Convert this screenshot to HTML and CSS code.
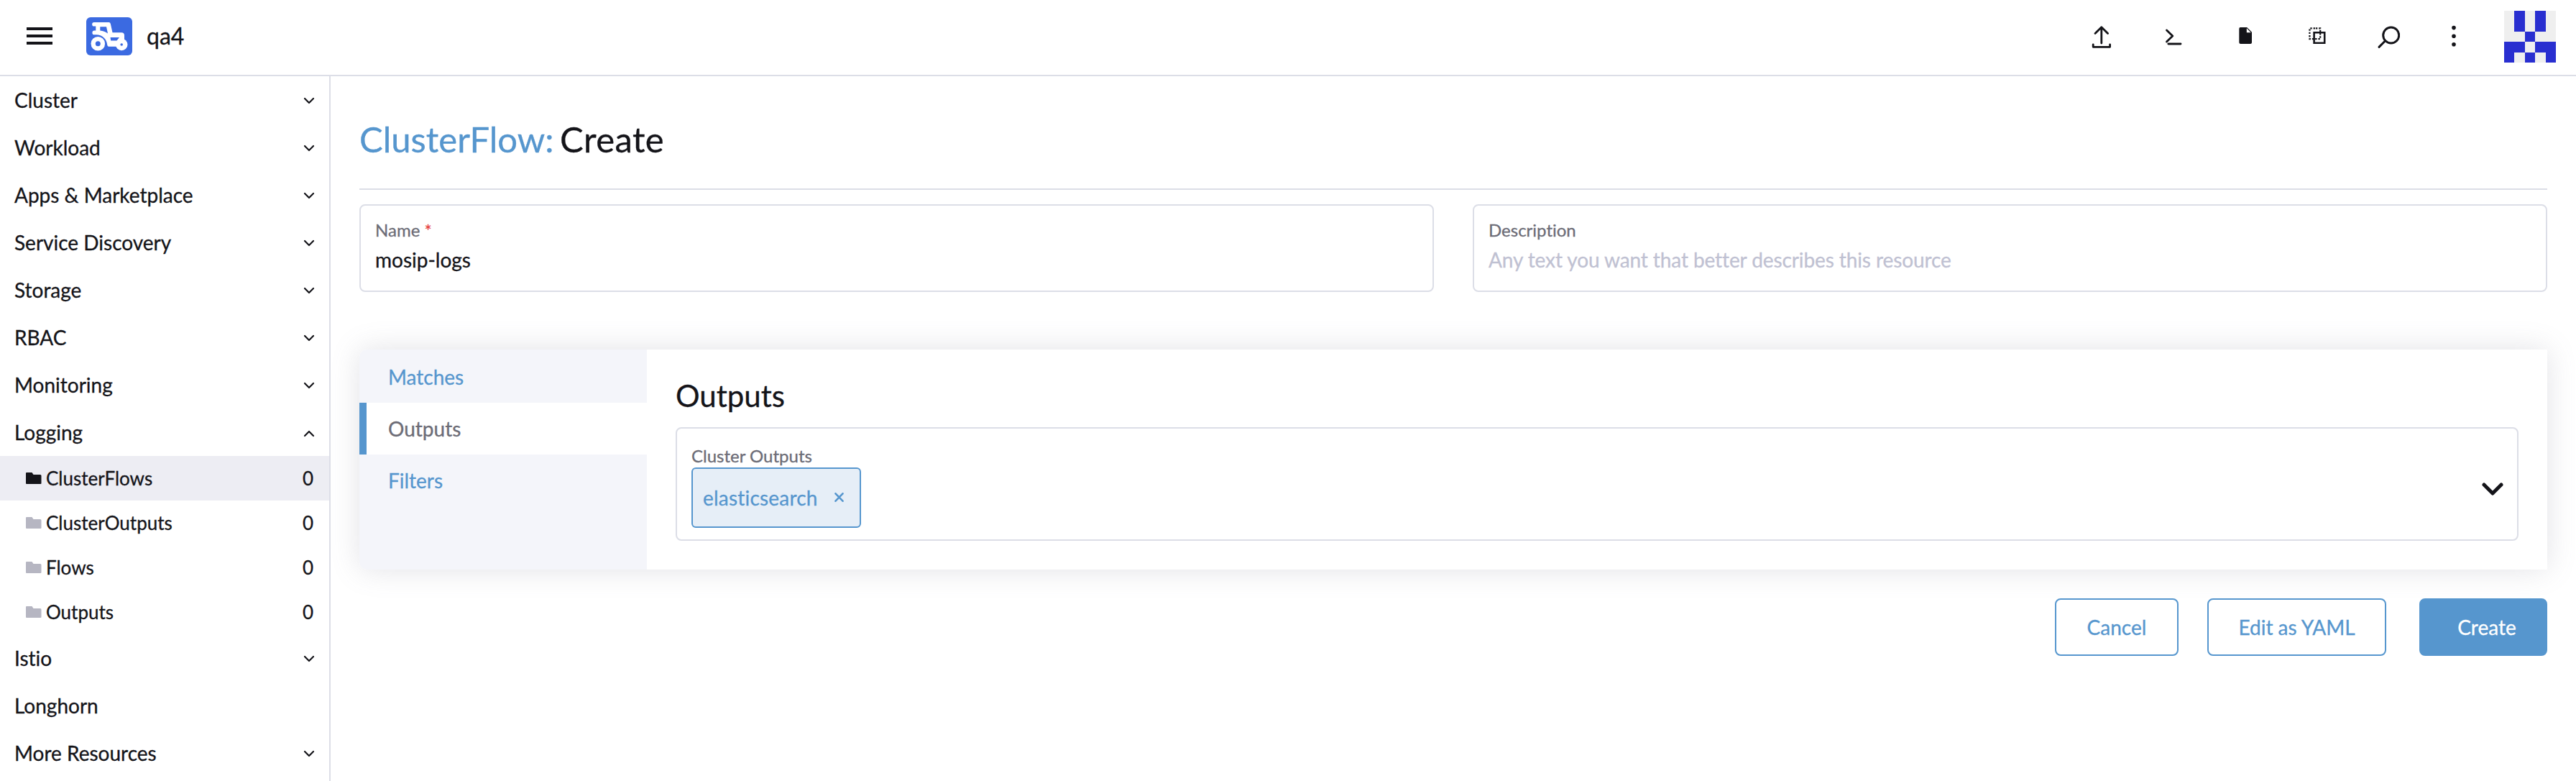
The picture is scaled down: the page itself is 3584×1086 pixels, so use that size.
FILE: index.html
```html
<!DOCTYPE html>
<html lang="en">
<head>
<meta charset="utf-8">
<title>ClusterFlow: Create</title>
<link rel="stylesheet" href="styles.css">
</head>
<body>
<header class="topbar">
  <svg class="menu" width="36" height="24" viewBox="0 0 36 24"><path d="M0 0h36v4H0zM0 10h36v4H0zM0 20h36v4H0z"/></svg>
  <svg class="brand" width="64" height="53" viewBox="0 0 64 53">
    <rect width="64" height="53" rx="6" fill="#3b6ae1"/>
    <path fill="#fff" d="M11 6.900H31.500q1.800 0 2.300 2L36.500 21.200H49q4 0 4 4V34L44 40.700H31.500q-2 0-2.200-2C28.500 30 22 24.300 14 24.300H11.300a2.900 2.900 0 0 1 0-5.800H13.300V12.600H11a2.850 2.850 0 0 1 0-5.700z"/>
    <path fill="#3b6ae1" d="M19.300 13.200H28l2 9.300c-3-2.400-7-3.900-10.700-4.100zM33.500 28H46l-3.500 4.600h-8.300z"/>
    <circle cx="16.300" cy="36.700" r="9.800" fill="#fff"/><circle cx="16.300" cy="36.700" r="3.500" fill="#3b6ae1"/>
    <circle cx="49.200" cy="38" r="8.300" fill="#fff"/><circle cx="49.200" cy="38" r="1.800" fill="#3b6ae1"/>
  </svg>
  <span class="cluster-name">qa4</span>
  <nav class="tools">
    <svg class="tool upload" width="30" height="36" viewBox="0 0 30 36"><path d="M14.800 28V6M6 14.500L14.800 5.700l8.800 8.800M3.200 30V33.300H26.600V30"/></svg>
    <svg class="tool terminal" width="26" height="36" viewBox="0 0 26 36"><path d="M3.500 10l8.300 8-8.300 8M5.800 29H23"/></svg>
    <svg class="tool file" width="18" height="36" viewBox="0 0 18 36"><path class="solid" d="M2 6h9.200L18 12.800V27q0 2-2 2H2.300q-2 0-2-2V8q0-2 1.700-2z"/><path class="fold" d="M10.800 7.300v5.900h5.900z"/></svg>
    <svg class="tool copy" width="24" height="36" viewBox="0 0 24 36"><path class="dashed" d="M9 7.400H1.400V22.200H16.200V7.400H9"/><path d="M7.600 13.200H22.200V27.700H7.600z"/></svg>
    <svg class="tool search" width="32" height="36" viewBox="0 0 32 36"><circle cx="19.700" cy="17" r="11"/><path d="M10.600 25.800L3 33.400"/></svg>
    <svg class="tool more" width="6" height="36" viewBox="0 0 6 36"><circle class="solid" cx="3" cy="6.600" r="2.800"/><circle class="solid" cx="3" cy="18.200" r="2.800"/><circle class="solid" cx="3" cy="29.700" r="2.800"/></svg>
    <svg class="avatar" width="72" height="72" viewBox="0 0 5 5" shape-rendering="crispEdges"><path fill="#efefef" d="M0 0h5v5H0z"/><path fill="#292fd0" d="M1 0h1v2H1zM3 0h1v2H3zM2 2h1v1H2zM0 3h2v1H1v1H0zM3 3h2v2H4V4H3zM2 4h1v1H2z"/></svg>
  </nav>
</header>
<div class="body">
  <aside class="sidebar">
    <div class="group">Cluster<svg class="chev" viewBox="0 0 14 9"><path d="M1 1l6 6 6-6"/></svg></div>
    <div class="group">Workload<svg class="chev" viewBox="0 0 14 9"><path d="M1 1l6 6 6-6"/></svg></div>
    <div class="group">Apps &amp; Marketplace<svg class="chev" viewBox="0 0 14 9"><path d="M1 1l6 6 6-6"/></svg></div>
    <div class="group">Service Discovery<svg class="chev" viewBox="0 0 14 9"><path d="M1 1l6 6 6-6"/></svg></div>
    <div class="group">Storage<svg class="chev" viewBox="0 0 14 9"><path d="M1 1l6 6 6-6"/></svg></div>
    <div class="group">RBAC<svg class="chev" viewBox="0 0 14 9"><path d="M1 1l6 6 6-6"/></svg></div>
    <div class="group">Monitoring<svg class="chev" viewBox="0 0 14 9"><path d="M1 1l6 6 6-6"/></svg></div>
    <div class="group">Logging<svg class="chev" viewBox="0 0 14 9"><path d="M1 8l6-6 6 6"/></svg></div>
    <div class="item current"><svg class="folder" viewBox="0 0 22 17"><path d="M1 0h7.500l2 3H20q1.500 0 1.500 1.500v10.500q0 1-1 1H1q-1 0-1-1V1q0-1 1-1z"/></svg><span class="item-name">ClusterFlows</span><span>0</span></div>
    <div class="item"><svg class="folder" viewBox="0 0 22 17"><path d="M1 0h7.500l2 3H20q1.500 0 1.500 1.500v10.500q0 1-1 1H1q-1 0-1-1V1q0-1 1-1z"/></svg><span class="item-name">ClusterOutputs</span><span>0</span></div>
    <div class="item"><svg class="folder" viewBox="0 0 22 17"><path d="M1 0h7.500l2 3H20q1.500 0 1.500 1.500v10.500q0 1-1 1H1q-1 0-1-1V1q0-1 1-1z"/></svg><span class="item-name">Flows</span><span>0</span></div>
    <div class="item"><svg class="folder" viewBox="0 0 22 17"><path d="M1 0h7.500l2 3H20q1.500 0 1.500 1.500v10.500q0 1-1 1H1q-1 0-1-1V1q0-1 1-1z"/></svg><span class="item-name">Outputs</span><span>0</span></div>
    <div class="group">Istio<svg class="chev" viewBox="0 0 14 9"><path d="M1 1l6 6 6-6"/></svg></div>
    <div class="group">Longhorn</div>
    <div class="group">More Resources<svg class="chev" viewBox="0 0 14 9"><path d="M1 1l6 6 6-6"/></svg></div>
  </aside>
  <main class="main">
    <h1 class="title"><span class="kind">ClusterFlow:</span> <span class="action">Create</span></h1>
    <div class="fields">
      <div class="field"><label class="label">Name <span class="required">*</span></label><div class="value">mosip-logs</div></div>
      <div class="field"><label class="label">Description</label><div class="value placeholder">Any text you want that better describes this resource</div></div>
    </div>
    <section class="panel">
      <nav class="tabs">
        <div class="tab">Matches</div>
        <div class="tab active">Outputs</div>
        <div class="tab">Filters</div>
      </nav>
      <div class="content">
        <h3 class="heading">Outputs</h3>
        <div class="select">
          <div class="select-main">
            <label class="label">Cluster Outputs</label>
            <div class="chip"><span>elasticsearch</span><svg width="15" height="13" viewBox="0 0 15 13"><path d="M2.500 1.300l10 10.400M12.500 1.300L2.500 11.700"/></svg></div>
          </div>
          <svg class="open" width="30" height="18" viewBox="0 0 30 18"><path d="M3 3l12 12L27 3"/></svg>
        </div>
      </div>
    </section>
    <footer class="actions">
      <button class="btn cancel">Cancel</button>
      <button class="btn yaml">Edit as YAML</button>
      <button class="btn create">Create</button>
    </footer>
  </main>
</div>
</body>
</html>
```
FILE: styles.css
```css
* { box-sizing: border-box; }
body {
  margin: 0;
  height: 1086px;
  display: flex;
  flex-direction: column;
  overflow: hidden;
  background: #fff;
  color: #141419;
  font: 28px/1.2 Lato, "Liberation Sans", sans-serif;
  font-variant-ligatures: none;
  -webkit-text-stroke: 0.3px;
}
svg { display: block; flex: none; }

/* Top bar */
.topbar {
  height: 106px;
  flex: none;
  display: flex;
  align-items: center;
  padding: 0 28px 4px 37px;
  border-bottom: 2px solid #dcdee7;
  fill: #141419;
}
.brand { margin-left: 47px; }
.cluster-name { margin-left: 20px; font-size: 32px; }
.tools { margin-left: auto; display: flex; align-items: center; }
.tool { fill: none; stroke: #141419; stroke-width: 2.8; stroke-linecap: round; stroke-linejoin: round; }
.tool .solid { fill: #141419; stroke: none; }
.tool .fold { fill: #fff; stroke: none; }
.tool .dashed { stroke-width: 2.2; stroke-dasharray: 2.4 1.9; stroke-linecap: butt; }
.terminal { margin-left: 72px; }
.file { margin-left: 78px; }
.copy { margin-left: 79px; stroke-width: 2.6; stroke-linejoin: miter; }
.search { margin-left: 71px; stroke-width: 3; }
.more { margin-left: 72px; }
.avatar { margin: 2px 0 0 67px; }

/* Side navigation */
.body { display: flex; flex: 1; min-height: 0; }
.sidebar { width: 460px; flex: none; border-right: 2px solid #dcdee7; }
.group {
  height: 66px;
  padding: 2px 21px 0 20px;
  display: flex;
  align-items: center;
  justify-content: space-between;
}
.chev { width: 14px; height: 9px; overflow: visible; fill: none; stroke: #141419; stroke-width: 2.2; stroke-linecap: round; stroke-linejoin: round; }
.item { height: 62px; padding: 1px 22px 0 36px; display: flex; align-items: center; font-size: 26px; }
.item.current { background: #ededf3; }
.folder { width: 22px; height: 17px; margin-right: 6px; fill: #b6b6c2; }
.current .folder { fill: #141419; }
.item-name { flex: 1; }

/* Form */
.main { flex: 1; min-width: 0; padding: 0 40px; }
.title { margin: 0; height: 158px; padding-top: 58px; border-bottom: 2px solid #dcdee7; font-size: 49px; font-weight: 400; line-height: 58px; word-spacing: -4px; }
.action { letter-spacing: 0.4px; }
.kind { color: #5696ce; }
.fields { display: grid; grid-template-columns: 1fr 1fr; gap: 54px; margin-top: 20px; }
.field { height: 122px; padding: 19px 20px; border: 2px solid #dcdee7; border-radius: 8px; }
.label { display: block; font-size: 24px; line-height: 30px; color: #6c6c76; }
.required { color: #e6413f; }
.value { margin-top: 7px; line-height: 38px; }
.placeholder { color: #bfc1d2; letter-spacing: -0.1px; }

/* Tabbed panel */
.panel { display: flex; height: 306px; margin-top: 80px; border-radius: 10px 0 0 10px; box-shadow: 0 0 40px rgba(108, 108, 128, 0.2); }
.tabs { width: 400px; padding-top: 2px; background: #f4f5fa; border-radius: 10px 0 0 10px; }
.tab { height: 72px; padding-left: 40px; line-height: 72px; color: #5696ce; }
.tab.active { padding-left: 30px; border-left: 10px solid #5696ce; background: #fff; color: #6c6c76; }
.content { flex: 1; padding: 40px 40px 0; background: #fff; }
.heading { margin: 0 0 20px; font-size: 42px; font-weight: 400; line-height: 48px; }
.select { height: 158px; display: flex; padding: 23px 20px 0; border: 2px solid #dcdee7; border-radius: 8px; }
.select-main { flex: 1; }
.chip {
  display: flex;
  align-items: center;
  justify-content: space-between;
  width: 236px;
  height: 84px;
  margin-top: 1px;
  padding: 2px 21px 0 14px;
  border: 2px solid #5696ce;
  border-radius: 6px;
  background: #e6eef7;
  color: #5696ce;
  letter-spacing: 0.2px;
}
.chip svg { margin-bottom: 3px; fill: none; stroke: #5696ce; stroke-width: 2.6; stroke-linecap: round; }
.open { margin: 52px -1px 0 0; fill: none; stroke: #141419; stroke-width: 5; stroke-linecap: round; stroke-linejoin: round; }

/* Footer buttons */
.actions { display: flex; justify-content: flex-end; margin-top: 40px; }
.btn { height: 80px; padding: 2px 0 0; border: 2px solid #5696ce; border-radius: 8px; background: #fff; color: #5696ce; font: inherit; }
.cancel { width: 172px; }
.yaml { width: 249px; margin-left: 40px; }
.create { width: 178px; margin-left: 46px; padding-left: 10px; background: #5696ce; color: #fff; }
```
